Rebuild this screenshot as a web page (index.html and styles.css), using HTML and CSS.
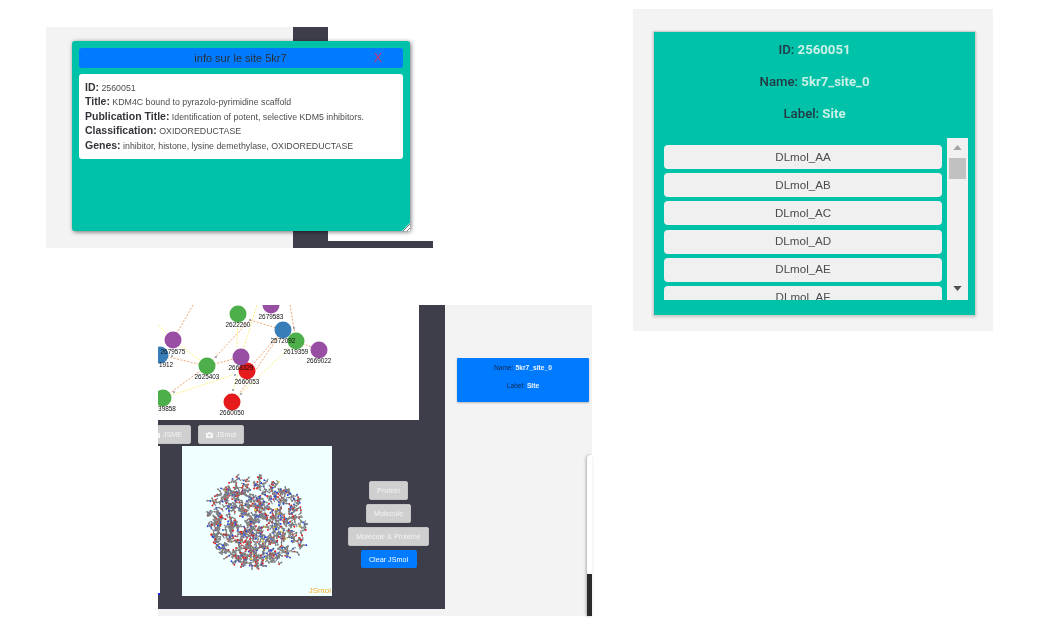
FILE: index.html
```html
<!DOCTYPE html>
<html lang="fr">
<head>
<meta charset="utf-8">
<title>Site 5kr7</title>
<link rel="stylesheet" href="styles.css">
</head>
<body>
<main class="stage">

  <section class="shot shot-info">
    <div class="info-gray"></div>
    <div class="info-column"></div>
    <div class="info-right"></div>
    <div class="modal">
      <header class="modal-head">
        <span class="modal-title">info sur le site 5kr7</span>
        <span class="modal-close">X</span>
      </header>
      <div class="modal-body">
        <p class="fact"><b>ID:</b> 2560051</p>
        <p class="fact"><b>Title:</b> KDM4C bound to pyrazolo-pyrimidine scaffold</p>
        <p class="fact"><b>Publication Title:</b> Identification of potent, selective KDM5 inhibitors.</p>
        <p class="fact"><b>Classification:</b> OXIDOREDUCTASE</p>
        <p class="fact"><b>Genes:</b> inhibitor, histone, lysine demethylase, OXIDOREDUCTASE</p>
      </div>
      <svg class="grip" viewBox="0 0 8 8"><path d="M0 8 8 0v8z" fill="#fff"/><path d="M1 8 8 1M5 8 8 5" stroke="#555" stroke-width=".8"/></svg>
    </div>
  </section>

  <section class="shot shot-detail">
    <div class="detail-card">
      <p class="detail-line">ID: <b>2560051</b></p>
      <p class="detail-line">Name: <b>5kr7_site_0</b></p>
      <p class="detail-line">Label: <b>Site</b></p>
      <div class="mol-area">
        <div class="mol-list">
          <button class="mol">DLmol_AA</button>
          <button class="mol">DLmol_AB</button>
          <button class="mol">DLmol_AC</button>
          <button class="mol">DLmol_AD</button>
          <button class="mol">DLmol_AE</button>
          <button class="mol">DLmol_AF</button>
        </div>
        <div class="scrollbar">
          <svg class="arrow" viewBox="0 0 10 6"><path d="M5 0 10 6H0z" fill="#a3a3a3"/></svg>
          <div class="thumb"></div>
          <svg class="arrow arrow-down" viewBox="0 0 10 6"><path d="M0 0H10L5 6z" fill="#505050"/></svg>
        </div>
      </div>
    </div>
  </section>

  <section class="shot shot-work">
    <div class="work-dark">
      <div class="graph">
        <svg class="graph-svg" viewBox="158 305 261 115">
          <g class="edges-o">
            <path d="M193 305 173 340M160 355 207 366M207 366 250 320 283 330M290 305 296 341M283 330 247 371M283 330 240 393M207 366 241 357M163 398 207 366M296 341 319 350"/>
          </g>
          <g class="edges-y">
            <path d="M158 325 173 340M173 340 207 366M257 305 241 357M238 314 237 347M296 341 232 402M163 398 233 375M233 390 238 375"/>
          </g>
          <g class="tips">
            <circle cx="172" cy="356" r=".9"/><circle cx="216" cy="357" r=".9"/><circle cx="250" cy="320" r=".9"/><circle cx="294" cy="328" r=".9"/><circle cx="235" cy="375" r=".9"/><circle cx="233" cy="390" r=".9"/><circle cx="241" cy="394" r=".9"/><circle cx="174" cy="392" r=".9"/>
          </g>
          <circle class="n-blue" cx="160" cy="355" r="8.500"/>
          <circle class="n-purple" cx="173" cy="340" r="8.500"/>
          <circle class="n-purple" cx="271" cy="305" r="8.500"/>
          <circle class="n-green" cx="238" cy="314" r="8.500"/>
          <circle class="n-blue" cx="283" cy="330" r="8.500"/>
          <circle class="n-green" cx="296" cy="341" r="8.500"/>
          <circle class="n-purple" cx="319" cy="350" r="8.500"/>
          <circle class="n-green" cx="207" cy="366" r="8.500"/>
          <circle class="n-red" cx="247" cy="371" r="8.500"/>
          <circle class="n-purple" cx="241" cy="357" r="8.500"/>
          <circle class="n-red" cx="232" cy="402" r="8.500"/>
          <circle class="n-green" cx="163" cy="398" r="8.500"/>
          <g class="labels">
            <text x="271" y="319">2679583</text>
            <text x="238" y="327">2622260</text>
            <text x="283" y="343">2572092</text>
            <text x="296" y="354">2619359</text>
            <text x="319" y="363">2669022</text>
            <text x="173" y="354">2679575</text>
            <text x="166" y="367">1912</text>
            <text x="207" y="379">2625403</text>
            <text x="241" y="370">2668329</text>
            <text x="247" y="384">2660053</text>
            <text x="232" y="415">2660050</text>
            <text x="167" y="411">39858</text>
          </g>
        </svg>
      </div>
      <div class="tools">
        <button class="gray-btn tool-first"><svg class="cam" viewBox="0 0 12 10"><path d="M4 0h4l1 1.500h3V10H0V1.500h3z" fill="#f4f4f4"/><circle cx="6" cy="5.500" r="2" fill="#cfcfcf"/></svg>JSME</button>
        <button class="gray-btn"><svg class="cam" viewBox="0 0 12 10"><path d="M4 0h4l1 1.500h3V10H0V1.500h3z" fill="#f4f4f4"/><circle cx="6" cy="5.500" r="2" fill="#cfcfcf"/></svg>JSmol</button>
      </div>
      <div class="viewer-row">
        <div class="edge-strip"></div>
        <div class="jsmol">
          <svg id="molecule" class="molecule" viewBox="0 0 150 150"></svg>
          <span class="jsmol-mark">JSmol</span>
        </div>
        <div class="actions">
          <button class="gray-btn action">Protein</button>
          <button class="gray-btn action">Molecule</button>
          <button class="gray-btn action">Molécule &amp; Protéine</button>
          <button class="clear-btn">Clear JSmol</button>
        </div>
      </div>
    </div>
    <div class="work-side">
      <div class="node-card">
        <p class="node-line">Name: <b>5kr7_site_0</b></p>
        <p class="node-line">Label: <b>Site</b></p>
      </div>
    </div>
    <div class="sliver"></div>
  </section>

</main>
<script src="molecule.js"></script>
</body>
</html>
```

FILE: styles.css
```css
* { box-sizing: border-box; }
html, body { margin: 0; padding: 0; background: #fff; }
body { font-family: "Liberation Sans", Arial, sans-serif; overflow: hidden; }
p { margin: 0; }
button { font-family: inherit; cursor: pointer; }

.stage { position: relative; width: 1046px; height: 627px; filter: blur(.3px); }
.shot { position: absolute; }

/* top-left screenshot */
.shot-info { left: 46px; top: 27px; width: 387px; height: 221px; display: flex; }
.info-gray { width: 247px; background: #f3f3f3; }
.info-column { width: 35px; background: #3d3e49; }
.info-right { flex: 1; align-self: flex-end; height: 7px; background: #3d3e49; }
.modal { position: absolute; left: 26px; top: 14px; width: 338px; height: 190px; padding: 7px; background: #00c2a8; border-radius: 3px; box-shadow: 1px 1px 4px rgba(0,0,0,.55); }
.modal-head { position: relative; height: 20px; background: #007bff; border-radius: 3px; display: flex; align-items: center; justify-content: center; font-size: 11px; color: #2a3038; }
.modal-title { margin-right: 1px; }
.modal-close { position: absolute; left: 295px; top: 3px; font-size: 12px; line-height: 14px; color: #d2306e; }
.modal-body { margin-top: 6px; height: 85px; padding: 6px 6px 0; background: #fff; border-radius: 3px; color: #4c4c50; font-size: 8.800px; }
.fact { height: 14.400px; line-height: 14.400px; white-space: nowrap; }
.fact b { font-size: 10.500px; color: #33333a; }
.grip { position: absolute; right: 0; bottom: 0; width: 8px; height: 8px; }

/* top-right screenshot */
.shot-detail { left: 633px; top: 9px; width: 360px; height: 322px; padding: 22px 17px 15px 20px; background: #f3f3f3; }
.detail-card { height: 285px; padding-top: 10px; background: #00c2a8; border: 1px solid #cfcfcf; box-shadow: 0 1px 3px rgba(0,0,0,.2); }
.detail-line { height: 32px; padding-bottom: 16px; text-align: center; font: 500 13.200px/16px Roboto, sans-serif; color: #243846; }
.detail-line b { font-weight: 700; color: #c9f0e7; }
.mol-area { display: flex; margin: 0 7px 0 10px; height: 162px; gap: 5px; }
.mol-list { flex: 1; height: 162px; padding-top: 7px; overflow: hidden; display: flex; flex-direction: column; gap: 4.200px; }
.mol { flex: none; height: 24px; padding: 0 0 2px; background: #f0f0f0; border: 0; border-radius: 4px; font-size: 11.600px; color: #4c4c50; }
.scrollbar { position: relative; width: 21px; background: #f1f1f1; padding: 7px 2px 0; }
.arrow { display: block; width: 9px; height: 5px; margin: 0 auto; }
.arrow-down { position: absolute; left: 6px; bottom: 9px; margin: 0; }
.thumb { height: 21px; margin-top: 8px; background: #c1c1c1; }

/* lower screenshot */
.shot-work { left: 158px; top: 305px; width: 434px; height: 311px; display: flex; background: #f3f3f3; }
.work-dark { flex: none; width: 287px; height: 304px; background: #3d3e49; }
.graph { width: 261px; height: 115px; background: #fff; overflow: hidden; }
.graph-svg { display: block; width: 261px; height: 115px; }
.edges-o path { fill: none; stroke: #eea873; stroke-width: 1; stroke-dasharray: 2 1.500; }
.edges-y path { fill: none; stroke: #fdf07a; stroke-width: 1; stroke-dasharray: 2 1.500; }
.tips circle { fill: #7f889c; }
.n-blue { fill: #377eb8; }
.n-purple { fill: #984ea3; }
.n-green { fill: #4daf4a; }
.n-red { fill: #e41a1c; }
.labels text { font-size: 6.400px; text-anchor: middle; fill: #111; font-family: "Liberation Sans", sans-serif; }

.tools { display: flex; gap: 7px; height: 26px; padding-top: 5px; overflow: hidden; }
.tool-first { margin-left: -14px; width: 47px; }
.gray-btn { height: 19px; padding: 0 7px; background: #cfcfcf; border: 1px solid #c4c4c4; border-radius: 2px; color: #f4f4f4; font-size: 7.200px; display: flex; align-items: center; justify-content: center; white-space: nowrap; }
.cam { width: 7px; height: 6px; margin-right: 3px; flex: none; }
.viewer-row { display: flex; align-items: flex-start; }
.edge-strip { width: 2px; height: 149px; margin-right: 22px; background: #fff; border-bottom: 2px solid #2222ee; }
.jsmol { position: relative; flex: none; width: 150px; height: 150px; background: #f0ffff; }
.molecule { display: block; width: 150px; height: 150px; }
.jsmol-mark { position: absolute; right: 1px; bottom: 0; font-size: 8px; line-height: 10px; color: #f5ad2c; }
.actions { flex: 1; display: flex; flex-direction: column; align-items: center; gap: 4px; padding-top: 35px; }
.action { height: 19px; }
.clear-btn { width: 56px; height: 18px; padding: 0; background: #007bff; border: 0; border-radius: 2px; color: #fff; font-size: 7.200px; }

.work-side { flex: 1; padding: 53px 3px 0 12px; }
.node-card { height: 44px; padding-top: 5px; background: #007bff; border-radius: 1px; box-shadow: 0 1px 2px rgba(0,0,0,.25); }
.node-line { height: 18px; text-align: center; font-size: 6.700px; line-height: 9px; color: #14284f; }
.node-line b { color: #eef4fd; }
.sliver { position: absolute; left: 429px; top: 150px; width: 5px; height: 161px; background: linear-gradient(#fff 119px, #2b2b2d 119px); border-top-left-radius: 4px; box-shadow: -1px 0 3px rgba(0,0,0,.3); }
```

FILE: molecule.js
```js
// Draws a ball-and-stick cloud of atoms into the JSmol viewer.
(function () {
  var svg = document.getElementById('molecule');
  var NS = 'http://www.w3.org/2000/svg';
  var seed = 5271;
  function rnd() {
    seed = (seed * 16807) % 2147483647;
    return seed / 2147483647;
  }
  function add(name, attrs) {
    var el = document.createElementNS(NS, name);
    for (var k in attrs) el.setAttribute(k, attrs[k]);
    svg.appendChild(el);
  }
  function atomColor() {
    var r = rnd();
    if (r < 0.55) return '#808080';
    if (r < 0.79) return '#f00d10';
    if (r < 0.985) return '#1f3ff0';
    return '#f0dc10';
  }
  for (var i = 0; i < 480; i++) {
    var a = rnd() * Math.PI * 2;
    var d = Math.pow(rnd(), 0.5);
    var x = 76 + Math.cos(a) * d * 48;
    var y = 76 + Math.sin(a) * d * 46;
    var steps = 2 + Math.floor(rnd() * 3);
    for (var s = 0; s < steps; s++) {
      var b = rnd() * Math.PI * 2;
      var nx = x + Math.cos(b) * 3;
      var ny = y + Math.sin(b) * 3;
      add('line', { x1: x, y1: y, x2: nx, y2: ny, stroke: '#808080', 'stroke-width': 1.1 });
      add('circle', { cx: nx, cy: ny, r: 0.9, fill: atomColor() });
      x = nx;
      y = ny;
    }
  }
})();
```
